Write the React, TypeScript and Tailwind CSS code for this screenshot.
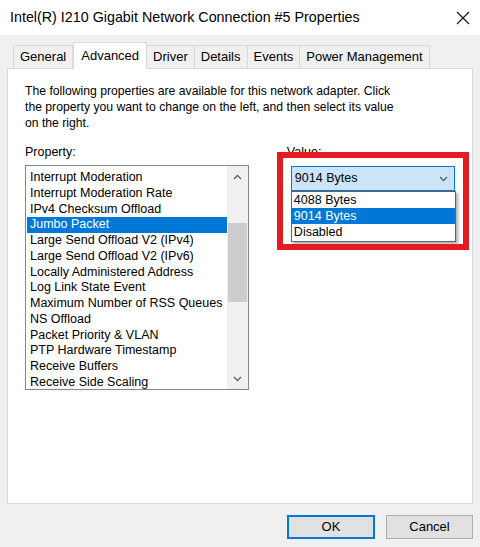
const items = [
  'Interrupt Moderation',
  'Interrupt Moderation Rate',
  'IPv4 Checksum Offload',
  'Jumbo Packet',
  'Large Send Offload V2 (IPv4)',
  'Large Send Offload V2 (IPv6)',
  'Locally Administered Address',
  'Log Link State Event',
  'Maximum Number of RSS Queues',
  'NS Offload',
  'Packet Priority & VLAN',
  'PTP Hardware Timestamp',
  'Receive Buffers',
  'Receive Side Scaling',
]

const tabs = ['General', 'Advanced', 'Driver', 'Details', 'Events', 'Power Management']

function Chevron({ up = false, className = '' }: { up?: boolean; className?: string }) {
  return (
    <svg width="9" height="6" viewBox="0 0 9 6" className={className}>
      <path
        d={up ? 'M1 5 L4.5 1.5 L8 5' : 'M1 1 L4.5 4.5 L8 1'}
        fill="none"
        stroke="#606060"
        strokeWidth="1.3"
      />
    </svg>
  )
}

export default function App() {
  return (
    <div
      className="flex h-[547px] w-[480px] flex-col bg-[#f0f0f0] text-black"
      style={{ fontFamily: '"Liberation Sans", Arial, sans-serif' }}
    >
      {/* title bar */}
      <div className="flex h-[35px] items-center justify-between bg-white pl-[10px] pr-[10px]">
        <span className="text-[14.3px]">Intel(R) I210 Gigabit Network Connection #5 Properties</span>
        <svg width="14" height="14" viewBox="0 0 14 14">
          <path d="M1 1 L13 13 M13 1 L1 13" stroke="#111" strokeWidth="1.1" />
        </svg>
      </div>

      {/* tabs */}
      <div className="mt-[6px] flex h-[27px] items-end pl-[13px] text-[13px]">
        {tabs.map((t) => {
          const active = t === 'Advanced'
          return (
            <div
              key={t}
              className={
                active
                  ? 'relative z-10 -mb-px flex h-[27px] items-start border border-b-0 border-[#d9d9d9] bg-white px-[7px] pt-[3px]'
                  : '-ml-px flex h-[23px] items-center border border-b-0 border-[#d9d9d9] bg-[#f0f0f0] px-[6px] first:ml-0'
              }
            >
              {t}
            </div>
          )
        })}
      </div>

      {/* panel */}
      <div className="mx-[7px] h-[436px] border border-[#d9d9d9] bg-white px-[17px] pt-[14px] text-[12.5px]">
        <p className="text-[12.2px] leading-[16px] whitespace-nowrap">
          The following properties are available for this network adapter. Click
          <br />
          the property you want to change on the left, and then select its value
          <br />
          on the right.
        </p>

        <div className="mt-[13px] flex">
          <div className="flex w-[225px] flex-col">
            <div className="leading-[16px]">Property:</div>
            <div className="mt-[5px] flex h-[225px] overflow-hidden border border-[#828790] bg-white">
              <div className="flex-1 pl-px pt-[4px]">
                {items.map((it) => (
                  <div
                    key={it}
                    className={
                      'h-[15.75px] pl-[3px] leading-[15.75px] whitespace-nowrap ' +
                      (it === 'Jumbo Packet' ? 'bg-[#0078d7] text-white' : '')
                    }
                  >
                    {it}
                  </div>
                ))}
              </div>
              <div className="flex w-[21px] flex-col bg-[#f0f0f0]">
                <div className="flex h-[21px] items-center justify-center">
                  <Chevron up />
                </div>
                <div className="flex-1 px-px pt-[36px]">
                  <div className="h-[79px] bg-[#cdcdcd]" />
                </div>
                <div className="flex h-[21px] items-center justify-center">
                  <Chevron />
                </div>
              </div>
            </div>
          </div>

          <div className="relative ml-[38px] flex w-[169px] flex-col">
            <div className="leading-[16px]">Value:</div>
            <div className="ml-[4px] mt-[6px] flex h-[25px] items-center justify-between border border-[#0078d7] bg-[#cce4f7] pl-[3px] pr-[6px]">
              <span>9014 Bytes</span>
              <Chevron />
            </div>

            {/* open dropdown list */}
            <div className="absolute left-[4px] top-[47px] z-10 w-[165px] border border-[#646464] bg-white shadow-[2px_2px_3px_rgba(0,0,0,0.35)]">
              <div className="h-[16px] pl-[2px] leading-[16px]">4088 Bytes</div>
              <div className="h-[16px] bg-[#0078d7] pl-[2px] leading-[16px] text-white">9014 Bytes</div>
              <div className="h-[17px] pl-[2px] leading-[16px]">Disabled</div>
            </div>

            {/* red annotation box */}
            <div className="pointer-events-none absolute -left-[10px] top-[8px] z-20 h-[98px] w-[192px] border-[6px] border-[#e31b23]" />
          </div>
        </div>
      </div>

      {/* buttons */}
      <div className="mt-[11px] flex justify-end gap-[11px] pr-[7px] text-[13px]">
        <button className="h-[24px] w-[88px] border-2 border-[#0078d7] bg-[#e1e1e1]">OK</button>
        <button className="h-[24px] w-[87px] border border-[#adadad] bg-[#e1e1e1]">Cancel</button>
      </div>
    </div>
  )
}
